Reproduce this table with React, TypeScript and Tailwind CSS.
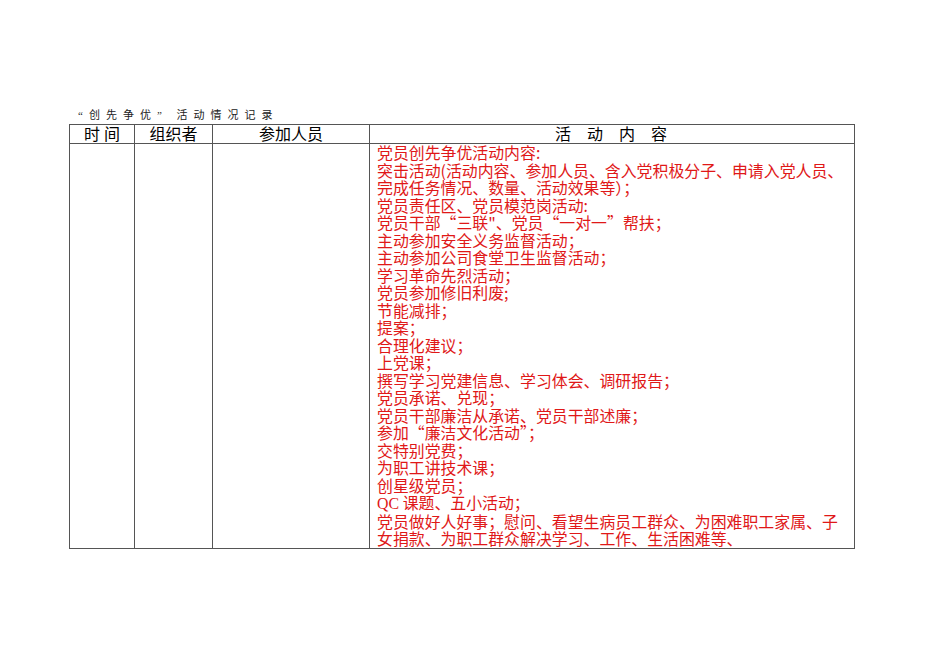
const lines = [
  '党员创先争优活动内容:',
  '突击活动(活动内容、参加人员、含入党积极分子、申请入党人员、',
  '完成任务情况、数量、活动效果等）；',
  '党员责任区、党员模范岗活动:',
  '党员干部“三联"、党员“一对一”帮扶；',
  '主动参加安全义务监督活动；',
  '主动参加公司食堂卫生监督活动；',
  '学习革命先烈活动；',
  '党员参加修旧利废;',
  '节能减排；',
  '提案；',
  '合理化建议；',
  '上党课；',
  '撰写学习党建信息、学习体会、调研报告；',
  '党员承诺、兑现；',
  '党员干部廉洁从承诺、党员干部述廉；',
  '参加“廉洁文化活动”；',
  '交特别党费；',
  '为职工讲技术课；',
  '创星级党员；',
  'QC',
  '党员做好人好事；慰问、看望生病员工群众、为困难职工家属、子',
  '女捐款、为职工群众解决学习、工作、生活困难等、',
]

const font = { fontFamily: '"Liberation Serif", "Noto Sans CJK SC", serif' }
const cjk = { fontFamily: '"Noto Sans CJK SC", "Liberation Serif", sans-serif' }

export default function App() {
  return (
    <div className="w-[950px] h-[672px] bg-white" style={font}>
      <div className="pt-[108px] pl-[69px]">
        <div className="pl-[9px] h-[16px] text-[11px] leading-[14px] tracking-[6px] text-[#222]">
          “创先争优” 活动情况记录
        </div>
        <table className="border-collapse table-fixed w-[785px] text-[16px]">
          <colgroup>
            <col className="w-[65px]" />
            <col className="w-[78px]" />
            <col className="w-[157px]" />
            <col className="w-[485px]" />
          </colgroup>
          <thead>
            <tr className="h-[19px]">
              <th className="border border-[#555] font-normal text-black leading-[17px] p-0">时 间</th>
              <th className="border border-[#555] font-normal text-black leading-[17px] p-0">组织者</th>
              <th className="border border-[#555] font-normal text-black leading-[17px] p-0">参加人员</th>
              <th className="border border-[#555] font-normal text-black leading-[17px] p-0 pl-[14px] tracking-[16px]">活动内容</th>
            </tr>
          </thead>
          <tbody>
            <tr>
              <td className="border border-[#555] p-0" />
              <td className="border border-[#555] p-0" />
              <td className="border border-[#555] p-0" />
              <td className="border border-[#555] pl-[7px] pt-0 pb-0 align-top">
                {lines.map((l, i) => (
                  <div key={i} className="whitespace-nowrap text-[#e01818] leading-[17.5px] text-[15.9px]" style={cjk}>
                    {l === 'QC' ? (
                      <>
                        <span style={font}>QC</span> 课题、五小活动；
                      </>
                    ) : (
                      l
                    )}
                  </div>
                ))}
              </td>
            </tr>
          </tbody>
        </table>
      </div>
    </div>
  )
}
